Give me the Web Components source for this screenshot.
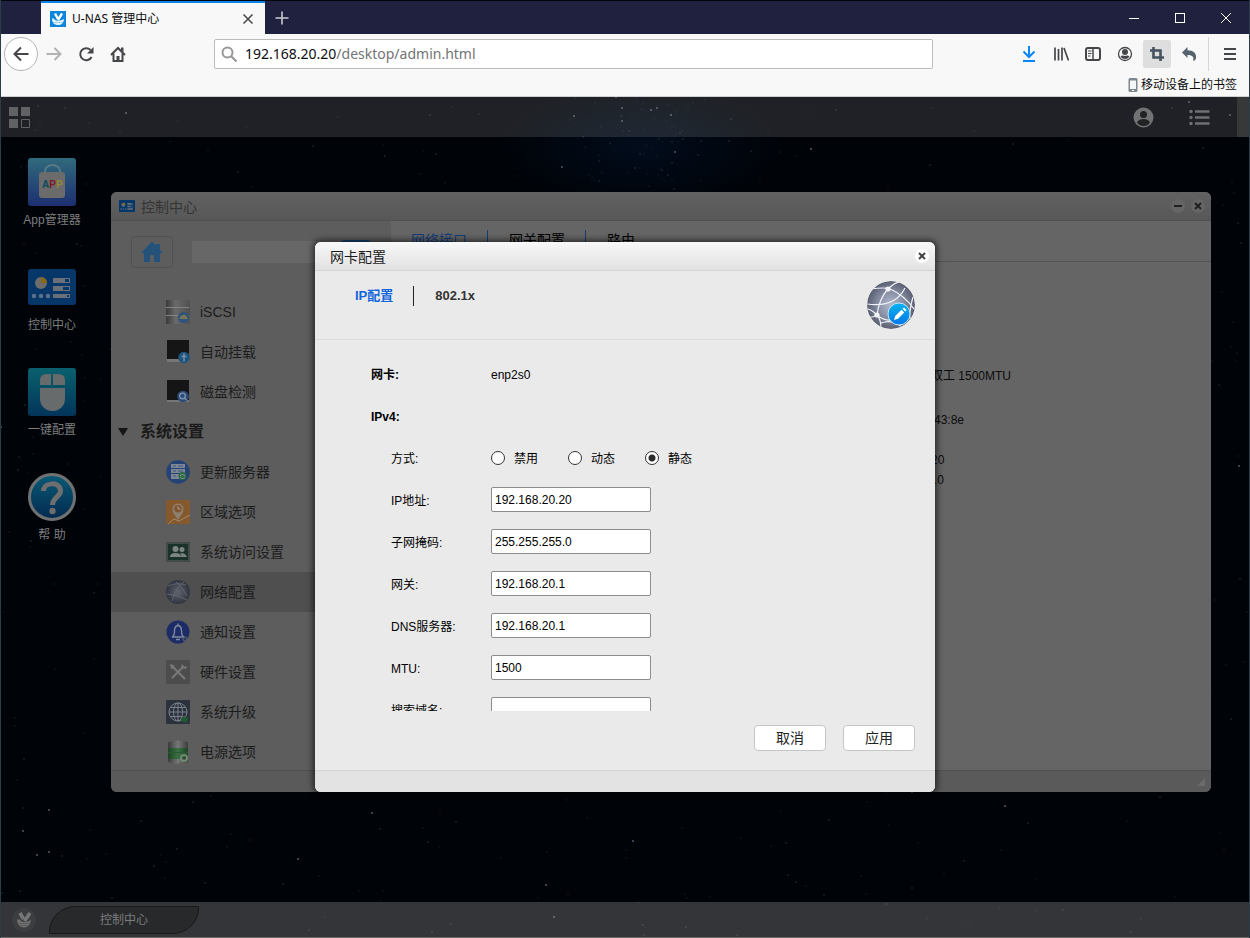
<!DOCTYPE html>
<html lang="zh-CN">
<head>
<meta charset="utf-8">
<title>U-NAS 管理中心</title>
<style>
  html, body { height: 100%; }
  body {
    margin: 0;
    background: #000;
    font-family: "Liberation Sans", Arial, "Noto Sans CJK SC", sans-serif;
    font-size: 12px;
    line-height: 20px;
  }
</style>
</head>
<body>
<browser-frame tab-title="U-NAS 管理中心" host="192.168.20.20" path="/desktop/admin.html">
  <nas-desktop></nas-desktop>
</browser-frame>

<script>
const ICONS = {
  favicon: `<rect width="16" height="16" fill="#0c85dc"/><path d="M5 2.500l3 5.500M12 2.500L8 9" stroke="#fff" stroke-width="2.400" fill="none"/><path d="M2 7.500h2c.5 1.500 2 2.200 4 2.200s4-.700 6-1.700c-.3 4-2.500 6-6 6s-6-2-6-6.500z" fill="#e4f3ff"/><path d="M3 11.500h10" stroke="#7cc1ef" stroke-width=".7"/>`,
  close: `<path d="M3.500 3.500l9 9M12.500 3.500l-9 9" stroke="currentColor" stroke-width="1.500"/>`,
  plus: `<path d="M8 1.500v13M1.500 8h13" stroke="currentColor" stroke-width="1.600"/>`,
  min: `<path d="M3 8.500h10" stroke="currentColor"/>`,
  max: `<rect x="3.500" y="3.500" width="9" height="9" fill="none" stroke="currentColor"/>`,
  winclose: `<path d="M3 3l10 10M13 3L3 13" stroke="currentColor"/>`,
  back: `<path d="M15.500 8H2M8 1.500L1.500 8 8 14.500" fill="none" stroke="currentColor" stroke-width="2"/>`,
  forward: `<path d="M.500 8H14M8.500 2l6 6-6 6" fill="none" stroke="currentColor" stroke-width="2"/>`,
  reload: `<path d="M13.600 11A6 6 0 1 1 12.500 4" fill="none" stroke="currentColor" stroke-width="2"/><path d="M15.500 1v6.500H9z" fill="currentColor"/>`,
  home: `<path d="M1 9l7-7 7 7M3.500 7.500V15h9V7.500" fill="none" stroke="currentColor" stroke-width="2"/><path d="M6.500 10h3v5h-3zM11 1.500h2.500V6L11 4z" fill="currentColor"/>`,
  search: `<circle cx="6.500" cy="6.500" r="5" fill="none" stroke="currentColor" stroke-width="2"/><path d="M10 10l5.500 5.500" stroke="currentColor" stroke-width="2.200"/>`,
  download: `<path d="M8 0v10M2.500 5.500L8 11l5.500-5.500M2 15h12" fill="none" stroke="#0a84ff" stroke-width="2"/>`,
  library: `<path d="M2 1.500v13M5.500 3v11.500M9 1.500v13M11 2l4.500 12.500" fill="none" stroke="currentColor" stroke-width="1.700"/>`,
  sidebar: `<rect x="1" y="2" width="14" height="12" rx="2" fill="none" stroke="currentColor" stroke-width="2"/><path d="M8 2v12" stroke="currentColor" stroke-width="1.500"/><path d="M3 5h3.500M3 7.500h3.500M3 10h2.500" stroke="currentColor"/>`,
  account: `<circle cx="8" cy="8" r="6.500" fill="none" stroke="currentColor" stroke-width="1.300"/><circle cx="8" cy="6" r="3" fill="currentColor"/><path d="M3.500 10.500Q5 9 8 10q3-1 4.500.500Q11 13 8 13t-4.500-2.500z" fill="currentColor"/>`,
  crop: `<path d="M4.500 1v10.500H15M1 4.500h10.500V15" fill="none" stroke="#45525f" stroke-width="2.600"/>`,
  undo: `<path d="M1 6.500L6.500 1v3.200c6 0 9 3 8.500 7.800-.200 1.500-1 2.500-3 3 1.300-3.500 0-6-5.500-6V12z" fill="#56636f"/>`,
  menu: `<path d="M2 3h12M2 8h12M2 13h12" stroke="currentColor" stroke-width="2"/>`,
  phone: `<rect x="3.500" y="1" width="9" height="14" rx="1.500" fill="#7d8791"/><rect x="5" y="3.500" width="6" height="8.500" fill="#f4f6f8"/><path d="M7 13.500h2" stroke="#fff"/>`,
  tiles: `<path d="M0 0h9v9H0zM12 0h9v9h-9zM0 12h9v9H0z" fill="#606263"/><path d="M12.500 12.500h8v8h-8z" fill="none" stroke="#606263"/>`,
  user: `<circle cx="10.500" cy="10.500" r="10" fill="#707273"/><circle cx="10.500" cy="7.500" r="3.500" fill="#202223"/><path d="M4 15.500q1.500-3.500 6.500-3.500t6.500 3.500q-2.500 3.500-6.500 3.500T4 15.500z" fill="#202223"/>`,
  list: `<path d="M6 4.500h14.500M6 10.500h14.500M6 16.500h14.500" stroke="#6e7071" stroke-width="2.600"/><g fill="#6e7071"><circle cx="2" cy="4.500" r="1.700"/><circle cx="2" cy="10.500" r="1.700"/><circle cx="2" cy="16.500" r="1.700"/></g>`,
  apps: `<defs><linearGradient id="g" x2="0" y2="1"><stop stop-color="#316a7c"/><stop offset="1" stop-color="#1c2f70"/></linearGradient></defs><rect width="48" height="48" rx="3" fill="url(#g)"/><path d="M17 15v-2a7.500 6 0 0 1 15 0v2" fill="none" stroke="#557c88" stroke-width="2"/><rect x="11" y="14" width="26" height="26" rx="3" fill="#6b6b6b"/><g font-family="Liberation Sans" font-weight="700" font-size="10"><text x="14" y="30"><tspan fill="#0c4a60">A</tspan><tspan fill="#801826">P</tspan><tspan fill="#958a35">P</tspan></text></g>`,
  control: `<rect y="6" width="48" height="36" rx="3" fill="#063768"/><circle cx="13" cy="20" r="6" fill="#6c6c6c"/><path d="M13 20v-6a6 6 0 0 1 6 6z" fill="#8a6712"/><g fill="#5f7188"><circle cx="6" cy="33" r="2.200"/><circle cx="13" cy="33" r="2.200"/><circle cx="20" cy="33" r="2.200"/></g><g fill="#69707a"><path d="M25 15h17v5H25zM25 23h17v5H25zM25 31h17v4H25z"/></g><path d="M37 16h4v3h-4zM35 24h6v3h-6zM39 32h2v2h-2z" fill="#063768"/>`,
  mouse: `<defs><linearGradient id="g" x2="0" y2="1"><stop stop-color="#09616d"/><stop offset="1" stop-color="#03345a"/></linearGradient></defs><rect width="48" height="48" rx="3" fill="url(#g)"/><path d="M12 17v-5q0-6 7-6h4v11zM25 6h5q7 0 7 6v5H25zM12 20h25v11a12.500 12 0 0 1-25 0z" fill="#686b6b"/>`,
  help: `<defs><linearGradient id="g" x2="0" y2="1"><stop stop-color="#085a76"/><stop offset="1" stop-color="#04294f"/></linearGradient></defs><circle cx="24" cy="24" r="22.500" fill="url(#g)" stroke="#707272" stroke-width="3"/><path d="M15.500 18c0-9 17-10 17 0 0 6-8 6-8 14" fill="none" stroke="#6e6e6e" stroke-width="5"/><circle cx="24.500" cy="38" r="3.200" fill="#6e6e6e"/>`,
  home2: `<path d="M12 1.500L1 13h3v9h6v-7h4v7h6v-9h3l-3-3.200V4h-4v1.500z" fill="#24527a"/>`,
  iscsi: `<defs><linearGradient id="g"><stop stop-color="#3a3a3a"/><stop offset=".4" stop-color="#6a6a6a"/><stop offset="1" stop-color="#505050"/></linearGradient></defs><rect width="24" height="24" fill="url(#g)"/><path d="M0 7.500h23M0 15.500h23" stroke="#838383"/><circle cx="17.500" cy="17.500" r="5.500" fill="#2d527f"/><path d="M13.500 19q0-3 3-4 3-1 4.500 2l1 2z" fill="#7a7754"/>`,
  mount: `<path d="M1 0h22v19H1z" fill="#151515"/><path d="M1 19h22v3H1z" fill="#777"/><circle cx="18" cy="17.500" r="5.800" fill="#1b547f"/><path d="M18 13.500v8M15.500 16.500h5" stroke="#7f8f9f" stroke-width="1.500"/>`,
  check: `<path d="M1 0h22v20H1z" fill="#151515"/><path d="M1 20h22v2H1z" fill="#777"/><circle cx="17" cy="16.500" r="5.800" fill="#2b4c78"/><circle cx="16.500" cy="16" r="2.800" fill="none" stroke="#7d90aa" stroke-width="1.300"/><path d="M18.500 18l2 2" stroke="#7d90aa" stroke-width="1.500"/>`,
  server: `<circle cx="12" cy="12" r="11.800" fill="#234377"/><g fill="#7e8792"><path d="M5 4h14v4H5zM5 9h14v4H5zM5 14h12v5H5z"/></g><path d="M7 6h3M7 11h3M7 16h3M12 6h5M12 11h5" stroke="#385b8c"/><circle cx="16.500" cy="16" r="4" fill="#2c6843"/><path d="M14 15.500q2.500-2 5 0M14 17.500q2.500 2 5 0" fill="none" stroke="#8a9b91"/>`,
  region: `<rect width="24" height="24" rx="2" fill="#85592c"/><path d="M2 24l6-5 5 2 11-6" fill="none" stroke="#a18a71"/><path d="M12 20C9 15 6.500 12.500 6.500 9a5.500 5.500 0 0 1 11 0c0 3.500-2.500 6-5.500 11z" fill="#8c8173"/><circle cx="12" cy="8.800" r="3.800" fill="#81542b"/><path d="M12 6v3h2.500" fill="none" stroke="#aaa092"/>`,
  access: `<path d="M0 2h24v20H0z" fill="#424b47"/><path d="M2 4h20v16H2z" fill="#1b322b"/><g fill="#7d8582"><circle cx="9.500" cy="9" r="3"/><path d="M4 17q0-4 5.500-4t5.500 4z"/><circle cx="16" cy="9.500" r="2.500"/><path d="M15 17q1-2-1-3.500 5-1.500 7 3.500z"/></g>`,
  network: `<defs><radialGradient id="g"><stop stop-color="#5f6470"/><stop offset="1" stop-color="#30343e"/></radialGradient></defs><circle cx="12" cy="12" r="12" fill="url(#g)"/><path d="M2 6q9-4 18-1M6 21Q9 8 18 2M1 14q12 1 20 6M10 2q8 7 11 14" fill="none" stroke="#686c78" stroke-width=".8"/>`,
  notify: `<circle cx="12" cy="12" r="11.500" fill="#1d2c66"/><path d="M6 17q2.500-1 2.500-6t3.500-5.500q3.500.500 3.500 5.500t2.500 6zM10 19.500h4M12 3.500v2" fill="none" stroke="#7e879c" stroke-width="1.400"/><circle cx="19" cy="19" r="2.500" fill="#535968"/><circle cx="19" cy="19" r="1" fill="#1d2c66"/>`,
  tools: `<rect width="24" height="24" rx="2" fill="#4c4c4c"/><path d="M6 6l13 13M18 6L6 18" stroke="#777" stroke-width="2.200"/><path d="M4 4l4 1v3l-3 1zM16 3l-1 5 5 1 1-3-3 1-1-1z" fill="#777"/>`,
  upgrade: `<rect width="24" height="24" rx="1" fill="#2c313e"/><g fill="none" stroke="#7b818b"><circle cx="12" cy="12" r="9"/><ellipse cx="12" cy="12" rx="4.500" ry="9"/><path d="M12 3v18M3 12h18M4.500 7.500h15M4.500 16.500h15"/></g><path d="M17 16l6 2-3 5-5-2z" fill="#1f5a30"/>`,
  power: `<defs><linearGradient id="g"><stop stop-color="#3c3c3c"/><stop offset=".5" stop-color="#777"/><stop offset="1" stop-color="#3c3c3c"/></linearGradient><linearGradient id="v"><stop stop-color="#1c4423"/><stop offset=".5" stop-color="#3c7045"/><stop offset="1" stop-color="#1c4423"/></linearGradient></defs><path d="M2 2q10-3 20 0v20q-10 3-20 0z" fill="url(#g)"/><path d="M2 8h20v11H2z" fill="url(#v)"/><path d="M2 12.500h20" stroke="#2a5a33"/><circle cx="18" cy="18" r="3" fill="none" stroke="#738a75" stroke-width="2"/>`,
  globe: `<defs><radialGradient id="g"><stop stop-color="#b4bace"/><stop offset=".5" stop-color="#8c92a8"/><stop offset="1" stop-color="#5a5f72"/></radialGradient><linearGradient id="b" x2="0" y2="1"><stop stop-color="#08b4ee"/><stop offset="1" stop-color="#0675e8"/></linearGradient><clipPath id="c"><circle cx="24" cy="24" r="24"/></clipPath></defs><g clip-path="url(#c)"><circle cx="24" cy="24" r="24" fill="url(#g)"/><path d="M3 8q16-2 20 0 14 6 24 20M21 8Q12 18 10 34M21 8q8-8 14-7M0 23q28 4 38-16M10 34Q5 29 1 28M10 34q4 4 4 14M10 34q-6 3-8 2M10 34q14 12 33-4M14 42q10-4 20 3M46 16q-4 14-3 22" fill="none" stroke="#f2f3f6" stroke-width="1.200"/><circle cx="21" cy="8" r="2.600" fill="#f2f3f6"/><circle cx="10" cy="34" r="2.600" fill="#f2f3f6"/></g><circle cx="32" cy="33" r="11" fill="url(#b)" stroke="#c5e8fb"/><path d="M27 39l1.200-4 6.300-6.300 2.800 2.800-6.300 6.300zM35.500 27.700l1.500-1.200 2.600 2.600-1.300 1.400z" fill="#fff"/>`,
  ylogo: `<circle cx="12" cy="12" r="12" fill="#3b3d3f"/><path d="M8 5l3.500 6M18 5l-5.500 8" stroke="#777" stroke-width="3.500"/><path d="M5 11.500h3c.5 1.500 2 2.500 4.500 2.500s4.500-1 6.500-2c-.5 4.500-3 7.500-7 7.500s-7-3-7-8z" fill="#707070"/><path d="M6 15.500h12M7.500 17.500h9" stroke="#555" stroke-width=".7"/>`,
  grip: `<path d="M10 2v8H2z" fill="#6b6b6b"/>`
};

// view box side for everything that is not drawn on a 16px grid
const GRID = {
  tiles: 21, user: 21, list: 21, apps: 48, control: 48, mouse: 48, help: 48, globe: 48,
  home2: 24, iscsi: 24, mount: 24, check: 24, server: 24, region: 24, access: 24,
  network: 24, notify: 24, tools: 24, upgrade: 24, power: 24, ylogo: 24, grip: 12
};

function define(name, html) {
  customElements.define(name, class extends HTMLElement {
    constructor() {
      super();
      this.attachShadow({ mode: 'open' });
    }

    connectedCallback() {
      this.shadowRoot.innerHTML = html(this);
    }
  });
}

define('ui-icon', el => {
  const name = el.getAttribute('name');
  const side = GRID[name] || 16;
  const size = el.getAttribute('size') || side;
  return `
    <style>
      :host { display: block; flex: none; }
      svg { display: block; }
    </style>
    <svg width="${size}" height="${size}" viewBox="0 0 ${side} ${side}" aria-hidden="true">${ICONS[name]}</svg>
  `;
});

define('browser-frame', el => `
  <style>
    :host {
      display: flex;
      flex-direction: column;
      box-sizing: border-box;
      min-height: 100vh;
      border: solid #2b3b49;
      border-width: 0 1px;
      color: #45464a;
      font-family: "Noto Sans", "Noto Sans CJK SC", sans-serif;
    }
    button {
      display: grid;
      place-items: center;
      flex: none;
      padding: 0;
      border: 0;
      border-radius: 2px;
      background: none;
      color: inherit;
    }
    .tabs {
      display: flex;
      height: 33px;
      padding-left: 40px;
      border-top: 1px solid #05050f;
      background: #20213f;
      color: #fff;
    }
    .tab {
      display: flex;
      align-items: center;
      gap: 6px;
      box-sizing: border-box;
      width: 224px;
      padding: 0 9px;
      border-top: 2px solid #0a84e8;
      background: #f8f8f8;
      color: #0c0c0d;
      font-size: 12px;
    }
    .tab span { flex: 1; }
    .tab button { color: #45464a; }
    .new { width: 34px; color: #c9c9d2; }
    .controls { display: flex; margin-left: auto; }
    .controls button { width: 46px; }
    .toolbar {
      display: flex;
      align-items: center;
      gap: 4px;
      height: 40px;
      padding: 0 5px 0 3px;
      background: #f8f8f8;
    }
    .toolbar button { width: 28px; height: 28px; }
    .toolbar .back {
      box-sizing: border-box;
      width: 34px;
      height: 34px;
      margin-right: -2px;
      border: 1px solid #b5b5b6;
      border-radius: 50%;
      background: #fff;
    }
    .off { color: #b2b2b3; }
    .toolbar .on { background: #dedede; }
    .address {
      display: flex;
      flex: 1;
      align-items: center;
      gap: 8px;
      box-sizing: border-box;
      height: 30px;
      margin: 0 78px;
      padding: 0 6px;
      border: 1px solid #bcbcbd;
      border-radius: 2px;
      background: #fff;
      font-size: 14px;
      color: #737374;
    }
    .address ui-icon { color: #97979a; }
    .address b { color: #0c0c0d; font-weight: 400; }
    .rule { width: 1px; height: 34px; margin: 0 3px 0 1px; background: #d5d5d6; }
    .bookmarks {
      display: flex;
      justify-content: flex-end;
      height: 22px;
      padding: 0 12px;
      border-bottom: 1px solid #d0d0d0;
      background: #f8f8f8;
    }
    .bookmarks a {
      display: flex;
      align-items: center;
      color: #0c0c0d;
      font-size: 12px;
      text-decoration: none;
    }
    main { display: flex; flex: 1; border-bottom: 1px solid #6c6c6c; }
    ::slotted(*) { flex: 1; }
  </style>
  <div class="tabs">
    <div class="tab">
      <ui-icon name="favicon"></ui-icon>
      <span>${el.getAttribute('tab-title')}</span>
      <button aria-label="关闭标签页"><ui-icon name="close"></ui-icon></button>
    </div>
    <button class="new" aria-label="新标签页"><ui-icon name="plus"></ui-icon></button>
    <div class="controls">
      <button aria-label="最小化"><ui-icon name="min"></ui-icon></button>
      <button aria-label="最大化"><ui-icon name="max"></ui-icon></button>
      <button aria-label="关闭"><ui-icon name="winclose"></ui-icon></button>
    </div>
  </div>
  <nav class="toolbar">
    <button class="back" aria-label="后退"><ui-icon name="back"></ui-icon></button>
    <button class="off" aria-label="前进"><ui-icon name="forward"></ui-icon></button>
    <button aria-label="刷新"><ui-icon name="reload"></ui-icon></button>
    <button aria-label="主页"><ui-icon name="home"></ui-icon></button>
    <div class="address">
      <ui-icon name="search"></ui-icon>
      <span><b>${el.getAttribute('host')}</b>${el.getAttribute('path')}</span>
    </div>
    <button aria-label="下载"><ui-icon name="download"></ui-icon></button>
    <button aria-label="书库"><ui-icon name="library"></ui-icon></button>
    <button aria-label="侧栏"><ui-icon name="sidebar"></ui-icon></button>
    <button aria-label="账户"><ui-icon name="account"></ui-icon></button>
    <button class="on" aria-label="截图"><ui-icon name="crop"></ui-icon></button>
    <button aria-label="撤销"><ui-icon name="undo"></ui-icon></button>
    <div class="rule"></div>
    <button aria-label="菜单"><ui-icon name="menu"></ui-icon></button>
  </nav>
  <div class="bookmarks"><a href="#"><ui-icon name="phone"></ui-icon>移动设备上的书签</a></div>
  <main><slot></slot></main>
`);

// Night sky behind the desktop, the same stars on every load
define('star-field', () => {
  let seed = 41;
  const next = () => (seed = (seed * 16807) % 2147483647) / 2147483647;
  const star = (x, y) => {
    const bright = next();
    const fill = bright > 0.9 ? '#4a5968' : bright > 0.6 ? '#28333f' : '#131b26';
    return `<circle cx="${x}" cy="${y}" r="${bright > 0.9 ? 1 : 0.8}" fill="${fill}"/>`;
  };
  let stars = '';
  for (let i = 0; i < 560; i++) {
    stars += star(Math.round(next() * 1248), Math.round(next() * 840));
  }
  // denser cluster near the top centre
  for (let i = 0; i < 70; i++) {
    stars += star(Math.round(560 + (next() + next()) * 80), Math.round(next() * 90));
  }
  return `
    <style>
      :host { display: block; position: absolute; inset: 0; }
      svg { display: block; width: 100%; height: 100%; }
    </style>
    <svg viewBox="0 0 1248 840" preserveAspectRatio="xMidYMid slice" aria-hidden="true">
      <defs>
        <radialGradient id="glow"><stop stop-color="#020c1c"/><stop offset="1" stop-color="#020c1c" stop-opacity="0"/></radialGradient>
      </defs>
      <rect width="1248" height="840" fill="#000308"/>
      <ellipse cx="640" cy="50" rx="140" ry="60" fill="url(#glow)"/>
      ${stars}
    </svg>
  `;
});

define('nas-desktop', () => `
  <style>
    :host {
      display: flex;
      flex-direction: column;
      position: relative;
      overflow: hidden;
      font-family: "Liberation Sans", Arial, "Noto Sans CJK SC", sans-serif;
    }
    header, footer, .shortcuts { position: relative; }
    header {
      display: flex;
      align-items: center;
      gap: 35px;
      height: 40px;
      padding-left: 8px;
      background: rgba(255, 255, 255, .12);
    }
    header ui-icon:nth-child(2) { margin-left: auto; }
    .edge { width: 12px; height: 40px; margin-left: -8px; background: #37383a; }
    .shortcuts {
      display: flex;
      flex: 1;
      flex-direction: column;
      align-items: center;
      gap: 33px;
      width: 102px;
      padding-top: 21px;
    }
    footer {
      display: flex;
      align-items: center;
      gap: 13px;
      height: 35px;
      padding: 0 11px;
      background: rgba(255, 255, 255, .2);
    }
    footer button {
      box-sizing: border-box;
      width: 150px;
      height: 28px;
      padding: 0;
      border: 1px solid #17181a;
      border-radius: 26px 0 26px 0;
      background: #27292b;
      color: #7c7c7c;
      font: inherit;
    }
    control-center { position: absolute; top: 95px; left: 110px; right: 38px; height: 600px; }
    nic-dialog { position: absolute; top: 145px; left: 0; right: 0; width: 620px; height: 550px; margin: 0 auto; }
  </style>
  <star-field></star-field>
  <header>
    <ui-icon name="tiles"></ui-icon>
    <ui-icon name="user"></ui-icon>
    <ui-icon name="list"></ui-icon>
    <div class="edge"></div>
  </header>
  <div class="shortcuts">
    <desktop-shortcut icon="apps" label="App管理器"></desktop-shortcut>
    <desktop-shortcut icon="control" label="控制中心"></desktop-shortcut>
    <desktop-shortcut icon="mouse" label="一键配置"></desktop-shortcut>
    <desktop-shortcut icon="help" label="帮 助"></desktop-shortcut>
  </div>
  <footer>
    <ui-icon name="ylogo"></ui-icon>
    <button>控制中心</button>
  </footer>
  <control-center></control-center>
  <nic-dialog></nic-dialog>
`);

define('desktop-shortcut', el => `
  <style>
    :host { display: block; }
    a {
      display: flex;
      flex-direction: column;
      align-items: center;
      gap: 4px;
      color: #7d7d7d;
      text-decoration: none;
    }
  </style>
  <a href="#"><ui-icon name="${el.getAttribute('icon')}"></ui-icon>${el.getAttribute('label')}</a>
`);

// Shared window shell, coloured through custom properties
define('nas-window', el => `
  <style>
    :host {
      display: flex;
      flex-direction: column;
      height: 100%;
      border-radius: 6px;
      overflow: hidden;
      background: var(--body);
    }
    header {
      display: flex;
      align-items: center;
      gap: 6px;
      box-sizing: border-box;
      height: 29px;
      padding: 0 6px 0 var(--inset);
      border-bottom: 1px solid var(--line);
      background: var(--bar);
    }
    h2 { flex: 1; margin: 0; padding-top: 2px; color: var(--title); font-size: 14px; font-weight: 400; }
    header button {
      display: grid;
      place-items: center;
      width: 14px;
      height: 14px;
      padding: 0;
      border: 0;
      border-radius: 50%;
      background: var(--knob);
    }
    header svg { display: block; }
    path { stroke: var(--mark); stroke-width: 2; fill: none; }
    .content { display: flex; flex: 1; min-height: 0; }
    ::slotted(:not([slot])) { flex: 1; }
    footer {
      display: flex;
      align-items: flex-end;
      justify-content: flex-end;
      box-sizing: border-box;
      height: 22px;
      padding: 4px;
      border-top: 1px solid var(--line);
      background: var(--foot);
    }
  </style>
  <header>
    <slot name="icon"></slot>
    <h2>${el.getAttribute('heading')}</h2>
    ${el.hasAttribute('minimizable') ? `<button aria-label="最小化"><svg width="8" height="8"><path d="M0 4h8"/></svg></button>` : ''}
    <button aria-label="关闭"><svg width="8" height="8"><path d="M1 1l6 6M7 1L1 7"/></svg></button>
  </header>
  <div class="content"><slot></slot></div>
  <footer><slot name="grip"></slot></footer>
`);

define('side-item', el => `
  <style>
    :host { display: block; }
    a {
      display: flex;
      align-items: center;
      gap: 10px;
      height: 40px;
      padding-left: 55px;
      color: #1c1c1c;
      font-size: 14px;
      text-decoration: none;
    }
    :host([selected]) a { background: #4f4f4f; }
  </style>
  <a href="#"><ui-icon name="${el.getAttribute('icon')}"></ui-icon>${el.getAttribute('label')}</a>
`);

define('control-center', () => `
  <style>
    :host {
      display: block;
      --body: #656565;
      --bar: linear-gradient(#626262, #575757);
      --foot: #5a5a5a;
      --line: #505050;
      --title: #343434;
      --knob: #656565;
      --mark: #202020;
      --inset: 8px;
    }
    .layout { display: flex; }
    aside { width: 280px; background: #5d5d5d; }
    .find { display: flex; align-items: center; padding: 15px 20px 24px; }
    .find button {
      display: grid;
      place-items: center;
      box-sizing: border-box;
      width: 42px;
      height: 32px;
      padding: 0;
      border: 1px solid #4e5257;
      border-radius: 4px;
      background: none;
    }
    .find input {
      flex: 1;
      box-sizing: border-box;
      min-width: 0;
      height: 22px;
      margin-left: 19px;
      border: 0;
      background: #676767;
    }
    .find .go { width: 30px; height: 24px; border: 0; background: #1b4170; }
    h3 { display: flex; align-items: center; gap: 12px; height: 40px; margin: 0; padding-left: 7px; color: #1a1a1a; font-size: 16px; }
    h3::before { content: ""; border: solid transparent; border-width: 8px 5px 0; border-top-color: #151515; }
    section { flex: 1; color: #0c0c0c; }
    nav { display: flex; box-sizing: border-box; height: 41px; padding: 9px 20px 8px; border-bottom: 1px solid #535353; }
    nav a { margin-right: 20px; color: #000; font-size: 14px; text-decoration: none; }
    nav a + a { padding-left: 21px; border-left: 1px solid #163c73; }
    nav .active { color: #123c78; }
    .facts { padding: 104px 0 0 540px; }
    p { margin: 0; }
    .speed { padding-bottom: 24px; }
    .mac { padding-bottom: 20px; }
    .tail { padding-left: 3px; }
  </style>
  <nas-window heading="控制中心" minimizable>
    <ui-icon slot="icon" name="control" size="16"></ui-icon>
    <div class="layout">
      <aside>
        <div class="find">
          <button aria-label="主页"><ui-icon name="home2"></ui-icon></button>
          <input type="search" aria-label="搜索">
          <button class="go" aria-label="搜索"></button>
        </div>
        <side-item icon="iscsi" label="iSCSI"></side-item>
        <side-item icon="mount" label="自动挂载"></side-item>
        <side-item icon="check" label="磁盘检测"></side-item>
        <h3>系统设置</h3>
        <side-item icon="server" label="更新服务器"></side-item>
        <side-item icon="region" label="区域选项"></side-item>
        <side-item icon="access" label="系统访问设置"></side-item>
        <side-item icon="network" label="网络配置" selected></side-item>
        <side-item icon="notify" label="通知设置"></side-item>
        <side-item icon="tools" label="硬件设置"></side-item>
        <side-item icon="upgrade" label="系统升级"></side-item>
        <side-item icon="power" label="电源选项"></side-item>
      </aside>
      <section>
        <nav>
          <a class="active" href="#">网络接口</a>
          <a href="#">网关配置</a>
          <a href="#">路由</a>
        </nav>
        <div class="facts">
          <p class="speed">双工 1500MTU</p>
          <p class="mac tail">43:8e</p>
          <p>20</p>
          <p class="tail">.0</p>
        </div>
      </section>
    </div>
    <ui-icon slot="grip" name="grip"></ui-icon>
  </nas-window>
`);

define('field-row', el => {
  const label = el.getAttribute('label');
  const control = el.hasAttribute('value')
    ? `<input id="field" type="text" value="${el.getAttribute('value')}">`
    : `<slot></slot>`;
  return `
    <style>
      :host { display: flex; height: 42px; padding-left: 20px; }
      :host([strong]) { padding-left: 0; }
      label, b { width: 100px; padding-top: 11px; }
      :host([strong]) b { width: 120px; }
      :host([strong]) ::slotted(*) { padding-top: 11px; }
      input {
        box-sizing: border-box;
        width: 160px;
        height: 25px;
        margin: 7px 0 0;
        padding: 0 3px;
        border: 1px solid #8c8c8c;
        border-radius: 2px;
        background: #fff;
        color: #000;
        font: inherit;
      }
    </style>
    ${el.hasAttribute('strong') ? `<b>${label}</b>` : `<label for="field">${label}</label>`}
    ${control}
  `;
});

define('nic-dialog', () => `
  <style>
    :host {
      display: block;
      border-radius: 6px;
      box-shadow: 0 0 6px 2px rgba(0, 0, 0, .6);
      color: #000;
      --body: #eaeaea;
      --bar: linear-gradient(#f8f8f8, #e2e2e2);
      --foot: #e3e3e3;
      --line: #d4d4d4;
      --title: #1c1c1c;
      --knob: #fff;
      --mark: #444;
      --inset: 15px;
    }
    .layout { display: flex; flex-direction: column; min-height: 0; }
    .head {
      display: flex;
      align-items: center;
      box-sizing: border-box;
      height: 69px;
      padding: 0 20px 0 40px;
      border-bottom: 1px solid #dcdcdc;
    }
    nav { display: flex; flex: 1; padding-bottom: 18px; font-size: 13px; font-weight: 700; }
    nav a { color: #333; text-decoration: none; }
    nav a + a { margin-left: 20px; padding-left: 21px; border-left: 1px solid #222; }
    nav .active { color: #1266dc; }
    form { flex: 1; min-height: 0; padding: 14px 56px 0; overflow: hidden; }
    .modes { display: flex; gap: 30px; padding-top: 11px; }
    .modes label { display: flex; gap: 9px; }
    .modes input {
      appearance: none;
      box-sizing: border-box;
      width: 14px;
      height: 14px;
      margin: 2px 0 0;
      border: 1px solid #333;
      border-radius: 50%;
      background: #fff;
    }
    .modes input:checked { background: radial-gradient(circle, #2b2b2b 3px, #fff 4px); }
    .actions { display: flex; justify-content: flex-end; gap: 17px; padding: 14px 20px 19px; }
    .actions button {
      box-sizing: border-box;
      width: 72px;
      height: 26px;
      padding: 0;
      border: 1px solid #c6c6c6;
      border-radius: 4px;
      background: #fff;
      color: #222;
      font: inherit;
      font-size: 14px;
    }
  </style>
  <nas-window heading="网卡配置">
    <div class="layout">
      <div class="head">
        <nav>
          <a class="active" href="#">IP配置</a>
          <a href="#">802.1x</a>
        </nav>
        <ui-icon name="globe"></ui-icon>
      </div>
      <form>
        <field-row label="网卡:" strong><span>enp2s0</span></field-row>
        <field-row label="IPv4:" strong></field-row>
        <field-row label="方式:">
          <div class="modes">
            <label><input type="radio" name="mode">禁用</label>
            <label><input type="radio" name="mode">动态</label>
            <label><input type="radio" name="mode" checked>静态</label>
          </div>
        </field-row>
        <field-row label="IP地址:" value="192.168.20.20"></field-row>
        <field-row label="子网掩码:" value="255.255.255.0"></field-row>
        <field-row label="网关:" value="192.168.20.1"></field-row>
        <field-row label="DNS服务器:" value="192.168.20.1"></field-row>
        <field-row label="MTU:" value="1500"></field-row>
        <field-row label="搜索域名:" value=""></field-row>
      </form>
      <div class="actions">
        <button>取消</button>
        <button>应用</button>
      </div>
    </div>
  </nas-window>
`);
</script>
</body>
</html>
